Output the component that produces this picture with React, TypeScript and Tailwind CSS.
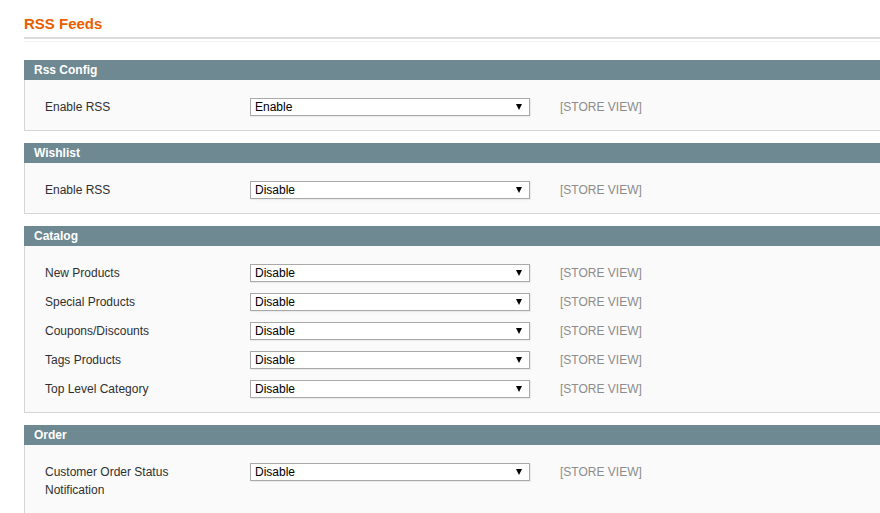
import React from "react";

type Row = { label: string; value: string };
type Section = { title: string; rows: Row[] };

const sections: Section[] = [
  { title: "Rss Config", rows: [{ label: "Enable RSS", value: "Enable" }] },
  { title: "Wishlist", rows: [{ label: "Enable RSS", value: "Disable" }] },
  {
    title: "Catalog",
    rows: [
      { label: "New Products", value: "Disable" },
      { label: "Special Products", value: "Disable" },
      { label: "Coupons/Discounts", value: "Disable" },
      { label: "Tags Products", value: "Disable" },
      { label: "Top Level Category", value: "Disable" },
    ],
  },
  {
    title: "Order",
    rows: [{ label: "Customer Order Status Notification", value: "Disable" }],
  },
];

function Select({ value }: { value: string }) {
  return (
    <div className="flex h-[18px] w-[280px] shrink-0 items-center justify-between border border-[#a9a9a9] bg-white pl-[4px] pr-[7px] text-[12px] leading-[16px] text-black shadow-[1px_1px_1px_rgba(0,0,0,0.06)]">
      <span>{value}</span>
      <span className="h-0 w-0 border-x-[3.5px] border-t-[6px] border-x-transparent border-t-black" />
    </div>
  );
}

export default function App() {
  return (
    <div
      className="h-[513px] w-[880px] overflow-hidden bg-white"
      style={{ fontFamily: '"Liberation Sans", Arial, sans-serif' }}
    >
      <div className="w-[900px] pl-[24px] pt-[13px]">
        <h3 className="h-[22px] text-[15px] font-bold leading-[22px] text-[#eb5e00]">RSS Feeds</h3>
        <div className="mt-[2px] h-[2px] bg-[#dcdcdc]" />
        <div className="mt-[2px] h-[1px] bg-[#f3f3f3]" />
        <div className="mt-[18px] flex flex-col gap-[12px]">
          {sections.map((s, i) => (
            <div key={s.title}>
              <div className="h-[20px] bg-[#6f8992] pl-[10px] text-[12px] font-bold leading-[20px] text-white">
                {s.title}
              </div>
              <div
                className={
                  i === sections.length - 1
                    ? "border border-t-0 border-[#d6d6d6] bg-[#fafafa] pb-[30px] pl-[20px] pt-[13px]"
                    : "border border-t-0 border-[#d6d6d6] bg-[#fafafa] pb-[8px] pl-[20px] pt-[13px]"
                }
              >
                {s.rows.map((r) => (
                  <div key={r.label} className="flex min-h-[29px] items-start pt-[5px]">
                    <div className="w-[205px] shrink-0 pr-[40px] text-[12px] leading-[18px] text-[#2f2f2f]">
                      {r.label}
                    </div>
                    <Select value={r.value} />
                    <div className="ml-[30px] text-[12px] leading-[18px] text-[#8c8c8c]">[STORE VIEW]</div>
                  </div>
                ))}
              </div>
            </div>
          ))}
        </div>
      </div>
    </div>
  );
}
